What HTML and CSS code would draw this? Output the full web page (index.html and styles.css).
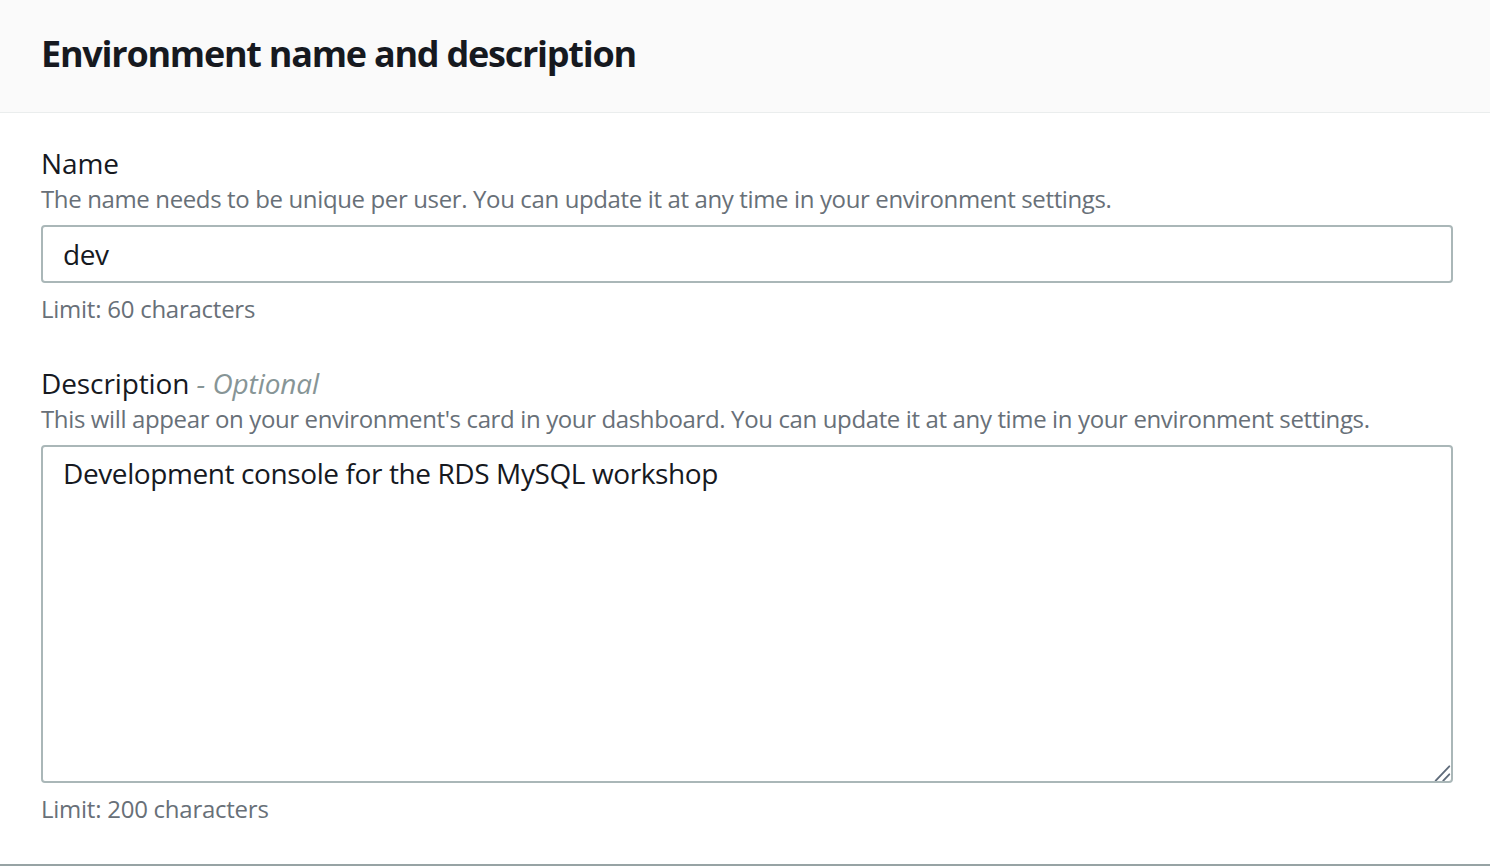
FILE: index.html
```html
<!DOCTYPE html>
<html lang="en">
<head>
<meta charset="utf-8">
<title>Environment name and description</title>
<link rel="stylesheet" href="styles.css">
</head>
<body>
<div class="panel">
  <div class="panel-header">
    <h2 class="panel-title">Environment name and description</h2>
  </div>
  <div class="panel-body">
    <div class="field">
      <label class="field-label" for="env-name">Name</label>
      <div class="field-desc">The name needs to be unique per user. You can update it at any time in your environment settings.</div>
      <input class="text-input" id="env-name" type="text" value="dev">
      <div class="field-hint">Limit: 60 characters</div>
    </div>
    <div class="field field-second">
      <label class="field-label" for="env-desc">Description <i class="optional">- Optional</i></label>
      <div class="field-desc">This will appear on your environment's card in your dashboard. You can update it at any time in your environment settings.</div>
      <div class="area-wrap">
        <textarea class="text-area" id="env-desc">Development console for the RDS MySQL workshop</textarea>
        <svg class="resize-grip" width="18" height="18" viewBox="0 0 18 18" aria-hidden="true">
          <path d="M2.7 17.7 L16.3 3.3 M10.3 17.7 L16.3 11.3" stroke="#5f6b7a" stroke-width="1.8" stroke-linecap="round" fill="none"/>
        </svg>
      </div>
      <div class="field-hint">Limit: 200 characters</div>
    </div>
  </div>
</div>
</body>
</html>
```
FILE: styles.css
```css
html, body {
  margin: 0;
  padding: 0;
  background: #ffffff;
}
body {
  font-family: "Open Sans", "Noto Sans", sans-serif;
  color: #16191f;
  width: 1490px;
  height: 866px;
  overflow: hidden;
}
.panel {
  height: 866px;
  box-sizing: border-box;
  border-bottom: 2px solid #97a3a4;
  display: flex;
  flex-direction: column;
}
.panel-header {
  background: #fafafa;
  border-bottom: 1px solid #eaeded;
  height: 113px;
  box-sizing: border-box;
  padding: 32px 41px 0;
}
.panel-title {
  margin: 0;
  font-size: 36px;
  line-height: 44px;
  font-weight: 700;
  letter-spacing: -1.25px;
  color: #16191f;
}
.panel-body {
  padding: 30px 37px 0 41px;
  display: flex;
  flex-direction: column;
}
.field {
  display: flex;
  flex-direction: column;
}
.field-second {
  margin-top: 38px;
}
.field-label {
  font-size: 28px;
  line-height: 40px;
  color: #16191f;
  letter-spacing: -0.1px;
}
.optional {
  color: #879596;
  font-style: italic;
}
.field-desc {
  font-size: 24px;
  line-height: 32px;
  color: #687078;
  letter-spacing: -0.37px;
}
.field-hint {
  font-size: 24px;
  line-height: 32px;
  color: #687078;
  letter-spacing: -0.25px;
  margin-top: 10px;
}
.text-input {
  margin-top: 10px;
  height: 58px;
  box-sizing: border-box;
  border: 2px solid #aab7b8;
  border-radius: 4px;
  padding: 0 20px;
  font-family: inherit;
  font-size: 28px;
  letter-spacing: -0.4px;
  color: #16191f;
  background: #fff;
  outline: none;
}
.area-wrap {
  position: relative;
  margin-top: 10px;
  display: flex;
}
.text-area {
  flex: 1;
  height: 338px;
  box-sizing: border-box;
  border: 2px solid #aab7b8;
  border-radius: 4px;
  padding: 6px 20px;
  font-family: inherit;
  font-size: 28px;
  line-height: 40px;
  letter-spacing: -0.4px;
  color: #16191f;
  background: #fff;
  resize: none;
  outline: none;
  margin: 0;
}
.resize-grip {
  position: absolute;
  right: 2px;
  bottom: 2px;
}
```
